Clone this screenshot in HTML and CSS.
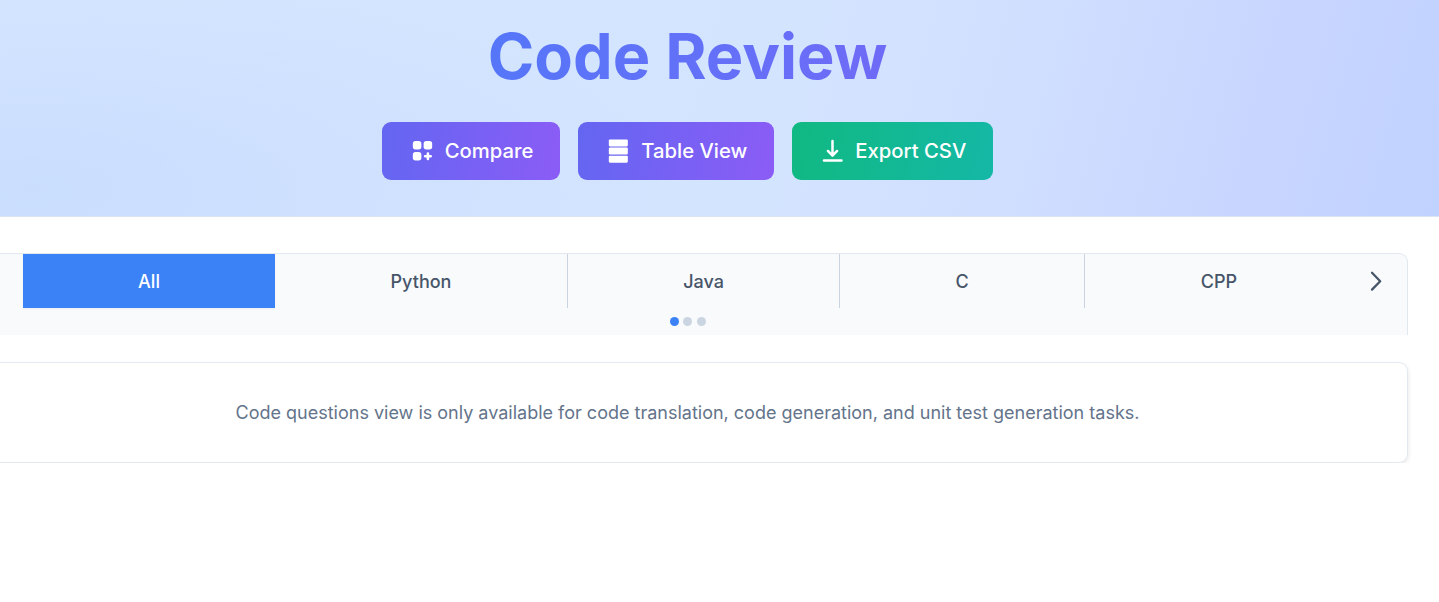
FILE: index.html
```html
<!DOCTYPE html>
<html lang="en">
<head>
<meta charset="utf-8">
<title>Code Review</title>
<link rel="stylesheet" href="styles.css">
</head>
<body>
<header class="hero">
  <h1 class="title">Code Review</h1>
  <div class="actions">
    <button class="btn">
      <svg class="icon" viewBox="0 0 24 24" fill="currentColor"><rect x="3.4" y="3.6" width="7.6" height="7.4" rx="2.4"/><rect x="13" y="3.6" width="7.6" height="7.4" rx="2.4"/><rect x="3.4" y="13.4" width="7.6" height="7.4" rx="2.4"/><path d="M16.8 14.6v5M14.3 17.1h5" fill="none" stroke="currentColor" stroke-width="2.3" stroke-linecap="round"/></svg>
      <span>Compare</span>
    </button>
    <button class="btn">
      <svg class="icon" viewBox="0 0 24 24" fill="currentColor"><rect x="3.4" y="2.2" width="16.9" height="6.2" rx="1"/><rect x="3.4" y="9.4" width="16.9" height="6.2" rx="1"/><rect x="3.4" y="16.6" width="16.9" height="6.2" rx="1"/></svg>
      <span>Table View</span>
    </button>
    <button class="btn btn-export">
      <svg class="icon" viewBox="0 0 24 24" fill="none" stroke="currentColor" stroke-width="2.2" stroke-linecap="round" stroke-linejoin="round"><path d="M12 3.6v12.6M7.9 12.4l4.1 4.1 4.1-4.1M4.4 20.9h15.6"/></svg>
      <span>Export CSV</span>
    </button>
  </div>
</header>
<main class="content">
  <nav class="tabs">
    <div class="tab-row">
      <button class="tab tab-all">All</button>
      <button class="tab tab-python">Python</button>
      <button class="tab tab-java">Java</button>
      <button class="tab tab-c">C</button>
      <button class="tab tab-cpp">CPP</button>
      <button class="next" aria-label="Next"><svg width="27" height="27" viewBox="0 0 24 24" fill="none" stroke="currentColor" stroke-width="2" stroke-linecap="round" stroke-linejoin="round"><path d="M8 4.2l7.3 7.5L8 19.2"/></svg></button>
    </div>
    <div class="dots"><i class="dot dot-on"></i><i class="dot"></i><i class="dot"></i></div>
  </nav>
  <section class="card">Code questions view is only available for code translation, code generation, and unit test generation tasks.</section>
</main>
</body>
</html>
```
FILE: styles.css
```css
* { box-sizing: border-box; }
body { margin: 0; background: #fff; font-family: Inter, sans-serif; overflow: hidden; }
button { font: inherit; border: 0; margin: 0; padding: 0; background: none; }
.hero {
  height: 217px;
  padding: 20px 64px 0 0;
  border-bottom: 1px solid #dbe4f2;
  display: flex;
  flex-direction: column;
  align-items: center;
  background:
    radial-gradient(ellipse 640px 240px at 30px 190px, rgba(192, 214, 252, .55), rgba(192, 214, 252, 0)),
    linear-gradient(105deg, #d5e6ff 0%, #d3e4ff 55%, #d2e0ff 66%, #c7d5ff 88%, #c0d2ff 100%);
}
.title {
  margin: 0;
  width: 611px;
  height: 72px;
  line-height: 72px;
  text-align: center;
  font-size: 63px;
  font-weight: 700;
  background: linear-gradient(90deg, #4f79f9, #7568f6);
  -webkit-background-clip: text;
  background-clip: text;
  color: transparent;
}
.actions { display: flex; gap: 18px; margin-top: 30px; }
.btn {
  height: 58px;
  padding: 0 27px 1px;
  display: flex;
  align-items: center;
  gap: 9px;
  border-radius: 9px;
  color: #fff;
  font-size: 20.25px;
  font-weight: 500;
  line-height: 28px;
  white-space: nowrap;
  background: linear-gradient(100deg, #6366f1, #8b5cf6);
}
.btn-export { background: linear-gradient(100deg, #10b981, #14b8a6); }
.icon { width: 27px; height: 27px; flex: none; }
.content { padding: 36px 31px 0 0; }
.tabs {
  height: 82px;
  border-top: 1px solid #e2e8f0;
  border-right: 1px solid #e2e8f0;
  border-top-right-radius: 9px;
  background: #f8fafc;
}
.tab-row { display: flex; height: 54px; padding-left: 23px; }
.tab {
  flex: none;
  font-size: 18px;
  font-weight: 500;
  color: #475569;
  border-right: 1px solid #cbd5e1;
}
.tab-all { width: 252px; background: #3b82f6; color: #fff; border: 0; box-shadow: 0 1px 2px rgba(0, 0, 0, .05); }
.tab-python { width: 293px; }
.tab-java { width: 272px; }
.tab-c { width: 245px; }
.tab-cpp { width: 268px; border: 0; }
.next { display: flex; align-items: center; margin-left: 10px; color: #475569; }
.dots { display: flex; gap: 4.4px; margin: 9px 0 0 669.8px; }
.dot { width: 9px; height: 9px; border-radius: 50%; background: #cbd5e1; }
.dot-on { background: #3b82f6; }
.card {
  margin-top: 27px;
  height: 101px;
  display: flex;
  align-items: center;
  justify-content: center;
  padding-right: 32px;
  border: 1px solid #e2e8f0;
  border-left: 0;
  border-radius: 0 9px 9px 0;
  box-shadow: 0 2px 5px rgba(0, 0, 0, .1);
  clip-path: inset(0 -10px 0 0);
  font-size: 18px;
  color: #64748b;
  white-space: nowrap;
}
```
